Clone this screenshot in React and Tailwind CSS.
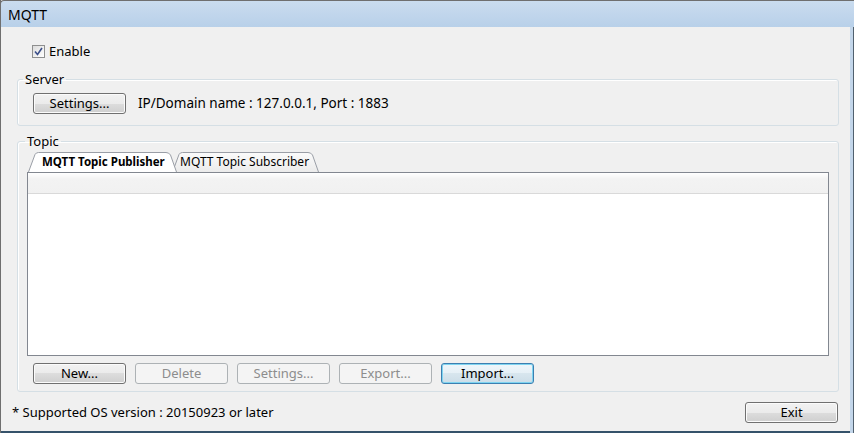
import { useState } from 'react';

const font = { fontFamily: '"Noto Sans", "Open Sans", "Liberation Sans", sans-serif' };

// Win7-style push button; variant picks normal / disabled / focused look
function Button({ children, variant = 'normal', className = '' }) {
  const look = {
    normal:
      'border-[#707070] text-black bg-[linear-gradient(#f2f2f2,#ebebeb_50%,#dddddd_50%,#cfcfcf)] shadow-[inset_0_0_0_1px_#fbfbfb]',
    disabled: 'border-[#adb2b5] text-[#8d8d8d] bg-[#f4f4f4]',
    focused:
      'border-[#3c7fb1] text-black bg-[linear-gradient(#eef6fb,#e6f0f6_50%,#d8e6ee_50%,#ccdde8)] shadow-[inset_0_0_0_1px_#7fd4f0]',
  }[variant];
  return (
    <button
      type="button"
      disabled={variant === 'disabled'}
      className={`h-[21px] w-[93px] rounded-[3px] border text-[13px] leading-none ${look} ${className}`}
    >
      {children}
    </button>
  );
}

function Tab({ label, active, onClick, width, textPad }) {
  return (
    <div
      onClick={onClick}
      className={`relative h-[20px] cursor-default ${active ? 'z-10' : 'z-0 -ml-[5px]'}`}
      style={{ width }}
    >
      <svg className="absolute inset-0" width={width} height="20" viewBox={`0 0 ${width} 20`}>
        <defs>
          <linearGradient id="tabIdle" x1="0" y1="0" x2="0" y2="1">
            <stop offset="0" stopColor="#fbfbfb" />
            <stop offset="1" stopColor="#ebebeb" />
          </linearGradient>
        </defs>
        <path
          d={`M0.5 20 L7 2.5 Q8 0.5 10.5 0.5 L${width - 11} 0.5 Q${width - 8} 0.5 ${width - 6.5} 3 L${width - 0.5} 20`}
          fill={active ? '#ffffff' : 'url(#tabIdle)'}
          stroke="#9a9ea6"
          strokeWidth="1"
        />
      </svg>
      <span
        className={`relative flex h-full items-center leading-none text-black ${active ? 'text-[11.5px] font-bold' : 'text-[12px]'}`}
        style={{ paddingLeft: textPad }}
      >
        {label}
      </span>
    </div>
  );
}

export default function App() {
  const [enabled, setEnabled] = useState(true);
  const [tab, setTab] = useState('pub');

  return (
    <div
      style={font}
      className="relative flex h-[433px] w-[854px] flex-col overflow-hidden bg-[#f0f0f0] text-[13px] text-black shadow-[inset_1px_0_0_#6f6f6f,inset_-1px_0_0_#50606e,inset_-4px_0_0_#c3d6ea,inset_0_-2px_0_#35526a]"
    >
      {/* title bar */}
      <div className="flex h-[27px] shrink-0 items-center rounded-tl-[4px] border-l border-t border-[#6f6f6f] bg-[linear-gradient(#cadcef,#b8d0e9)] pl-[7px] text-[14px]">
        MQTT
      </div>

      {/* enable */}
      <label className="ml-[32px] mt-[18px] flex h-[13px] items-center gap-[4px]">
        <span
          onClick={() => setEnabled(!enabled)}
          className="flex h-[13px] w-[13px] items-center justify-center border border-[#8e8f8f] bg-[linear-gradient(135deg,#dcdcdc,#ffffff)]"
        >
          {enabled && (
            <svg width="9" height="9" viewBox="0 0 9 9">
              <path d="M1 4.5 L3.5 7.5 L8 1" fill="none" stroke="#3b4f8a" strokeWidth="1.6" />
            </svg>
          )}
        </span>
        <span className="leading-none">Enable</span>
      </label>

      {/* server group */}
      <fieldset className="ml-[17px] mt-[14px] w-[822px] rounded-[3px] border border-[#d5dfe5] px-[15px] pb-[11px] pt-[7px] shadow-[inset_1px_1px_0_#ffffff]">
        <legend className="-ml-[10px] px-[2px] leading-[14px]">Server</legend>
        <div className="flex items-center gap-[12px]">
          <Button>Settings...</Button>
          <span className="text-[13.5px] leading-none">IP/Domain name : 127.0.0.1, Port : 1883</span>
        </div>
      </fieldset>

      {/* topic group */}
      <fieldset className="ml-[17px] mt-[8px] w-[822px] rounded-[3px] border border-[#d5dfe5] pl-[9px] pr-[9px] pb-[7px] pt-[4px] shadow-[inset_1px_1px_0_#ffffff]">
        <legend className="-ml-[2px] px-[2px] leading-[14px]">Topic</legend>
        <div className="ml-[1px] flex">
          <Tab label="MQTT Topic Publisher" active={tab === 'pub'} onClick={() => setTab('pub')} width={149} textPad={14} />
          <Tab label="MQTT Topic Subscriber" active={tab === 'sub'} onClick={() => setTab('sub')} width={147} textPad={8} />
        </div>
        <div className="h-[184px] border border-[#828790] bg-white">
          <div className="h-[21px] border-b border-[#d9d9d9] bg-[linear-gradient(#ffffff,#f3f3f3_30%,#f1f1f1)]" />
        </div>
        <div className="ml-[6px] mt-[7px] flex gap-[9px]">
          <Button>New...</Button>
          <Button variant="disabled">Delete</Button>
          <Button variant="disabled">Settings...</Button>
          <Button variant="disabled">Export...</Button>
          <Button variant="focused">Import...</Button>
        </div>
      </fieldset>

      {/* footer */}
      <div className="mt-[10px] flex items-center justify-between pl-[12px] pr-[16px]">
        <span className="leading-none">* Supported OS version : 20150923 or later</span>
        <Button>Exit</Button>
      </div>
    </div>
  );
}
